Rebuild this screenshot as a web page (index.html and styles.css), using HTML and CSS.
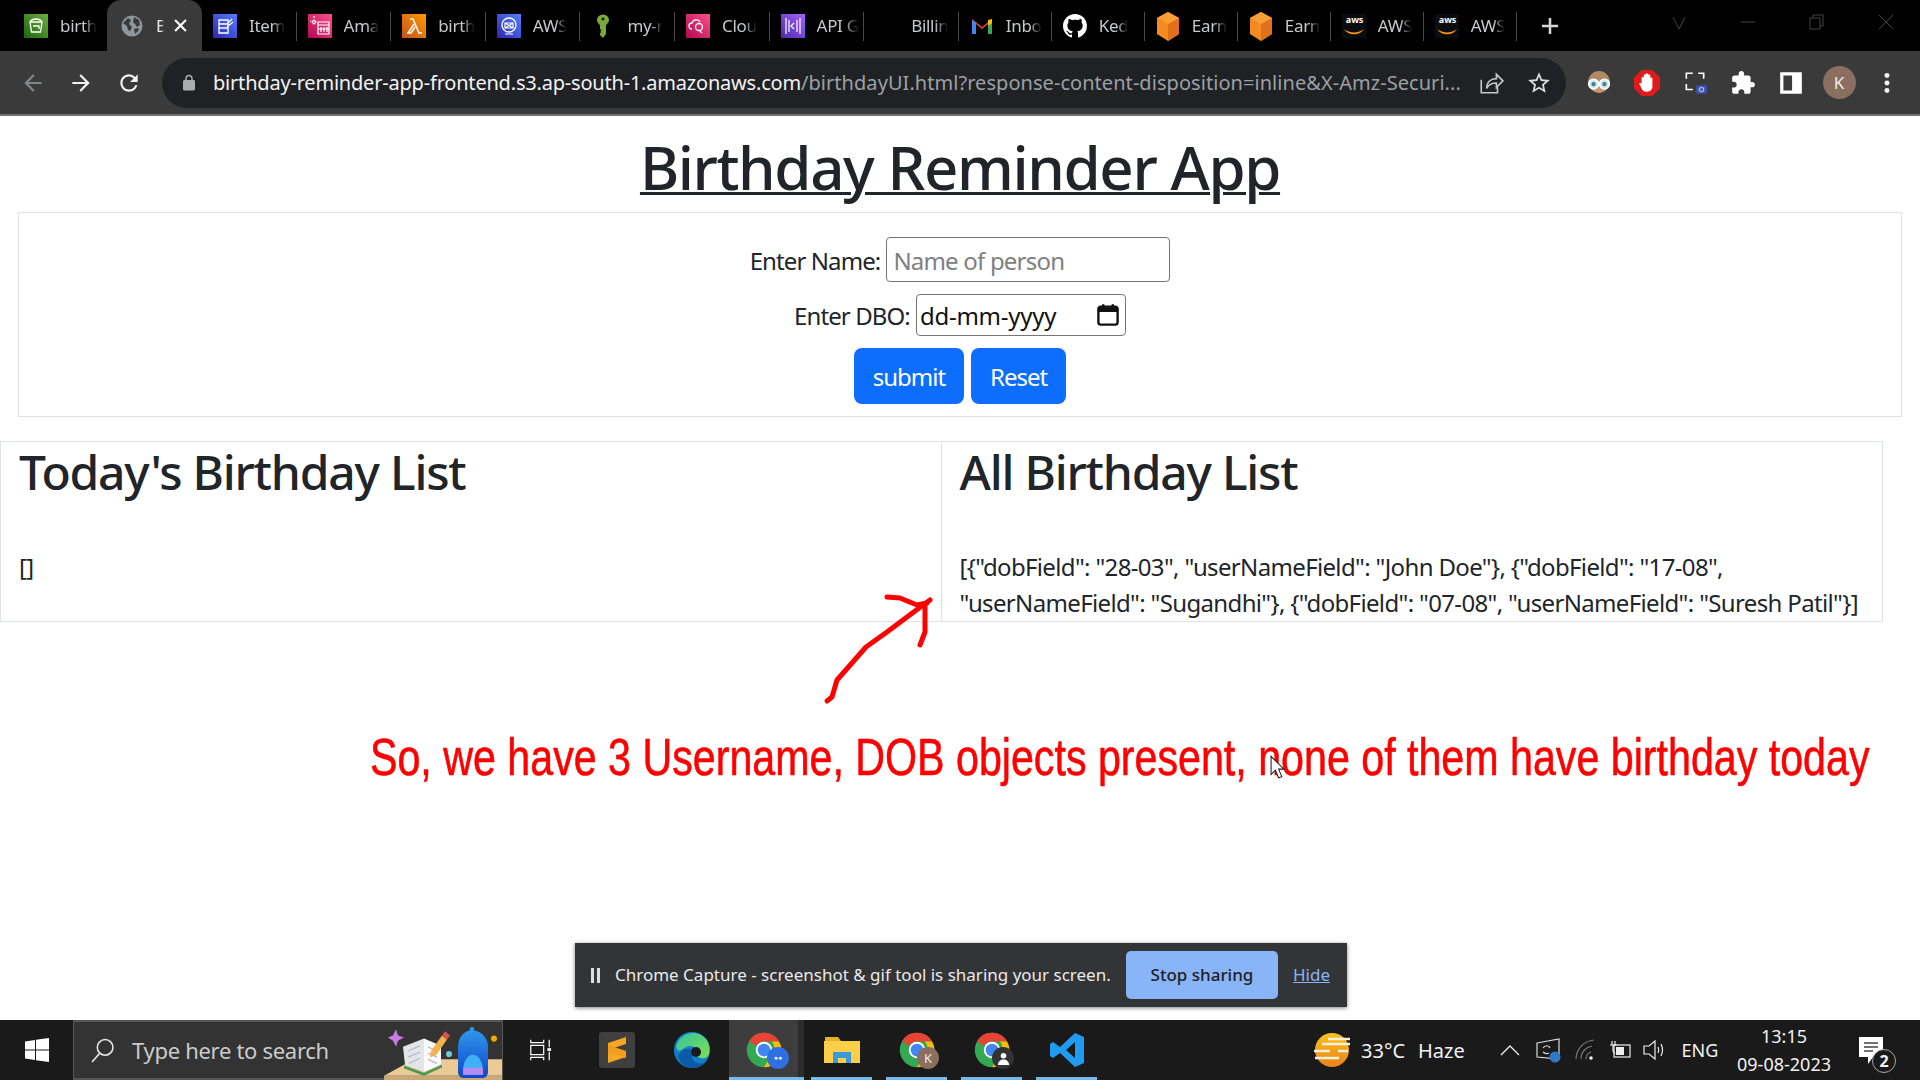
FILE: index.html
```html
<!DOCTYPE html>
<html lang="en">
<head>
<meta charset="utf-8">
<title>Birthday Reminder App</title>
<link rel="stylesheet" href="styles.css">
</head>
<body>
<svg class="sprite" width="0" height="0">
  <defs>
    <linearGradient id="gGreen" x1="0" y1="1" x2="1" y2="0"><stop offset="0" stop-color="#1b660f"/><stop offset="1" stop-color="#6cae3e"/></linearGradient>
    <linearGradient id="gBlue" x1="0" y1="1" x2="1" y2="0"><stop offset="0" stop-color="#2e27ad"/><stop offset="1" stop-color="#527fff"/></linearGradient>
    <linearGradient id="gPink" x1="0" y1="1" x2="1" y2="0"><stop offset="0" stop-color="#b0084d"/><stop offset="1" stop-color="#ff4f8b"/></linearGradient>
    <linearGradient id="gOrange" x1="0" y1="1" x2="1" y2="0"><stop offset="0" stop-color="#c8511b"/><stop offset="1" stop-color="#ff9900"/></linearGradient>
    <linearGradient id="gPurple" x1="0" y1="1" x2="1" y2="0"><stop offset="0" stop-color="#4d27a8"/><stop offset="1" stop-color="#a166ff"/></linearGradient>
    <linearGradient id="gEdge" x1="0" y1="0" x2="1" y2="1"><stop offset="0" stop-color="#34c1a0"/><stop offset="1" stop-color="#7ee04f"/></linearGradient>
    <linearGradient id="gSun" x1="0" y1="0" x2="0" y2="1"><stop offset="0" stop-color="#fcc21b"/><stop offset="1" stop-color="#e8821a"/></linearGradient>
    <linearGradient id="gBag" x1="0" y1="0" x2="0" y2="1"><stop offset="0" stop-color="#2f9bf0"/><stop offset="1" stop-color="#1345c8"/></linearGradient>
    <symbol id="chrome" viewBox="0 0 48 48">
      <circle cx="24" cy="24" r="23" fill="#34a853"/>
      <path d="M24 1a23 23 0 0 1 20 11.500H24a12 12 0 0 0-10.400 6L4 12A23 23 0 0 1 24 1z" fill="#ea4335"/>
      <path d="M44 12.500A23 23 0 0 1 24 47l10.400-17a12 12 0 0 0 0-17.500z" fill="#fbbc04"/>
      <circle cx="24" cy="24" r="11" fill="#fff"/><circle cx="24" cy="24" r="8.500" fill="#4285f4"/>
    </symbol>
    <symbol id="orangebox" viewBox="0 0 24 30">
      <path d="M12 1l11 6v16l-11 7-11-7V7z" fill="#f58a1f"/><path d="M12 13l11-6v16l-11 7z" fill="#e0701a"/><path d="M12 1l11 6-11 6L1 7z" fill="#fa9f35"/>
    </symbol>
    <symbol id="awslogo" viewBox="0 0 24 24">
      <rect width="24" height="24" fill="#0b0c0f"/>
      <path d="M2 15c5 4 14 5 20 0-4 7-16 7-20 0z" fill="#f90"/>
    </symbol>
  </defs>
</svg>

<header class="tabstrip">
  <div class="tab tab-first"><svg class="fav" viewBox="0 0 24 24"><rect width="24" height="24" fill="url(#gGreen)"/><path d="M6 8h12l-1.500 10h-9zM6 8c2-4 10-4 12 0M9 12h6v3" fill="none" stroke="#fff" stroke-width="1.300"/></svg><span class="tabtext">birth</span></div>
  <div class="tab tab-active"><svg class="fav" viewBox="0 0 24 24"><circle cx="12" cy="12" r="10.500" fill="#8f969c"/><path d="M3 9l5-5 3 2-2 4 3 3-2 4-2-1-1-4zM14 3l5 3 1 5-3 2-2-3-2-2zM14 15l4-1 1 2-4 4z" fill="#3a3a3a"/></svg><span class="tabtext tabtext-active">B</span><svg class="tabclose" viewBox="0 0 12 12"><path d="M1 1l10 10M11 1L1 11" stroke="#fff" stroke-width="2"/></svg></div>
  <div class="tab"><svg class="fav" viewBox="0 0 24 24"><rect width="24" height="24" fill="url(#gBlue)"/><path d="M6 6h9v13H6zM6 10h9M6 14h9M15 9l4-4M14 13l6-5" fill="none" stroke="#fff" stroke-width="1.300"/></svg><span class="tabtext">Item</span></div>
  <div class="tab tab-sep"><svg class="fav" viewBox="0 0 24 24"><rect width="24" height="24" fill="url(#gPink)"/><path d="M10 8h11v12H10zM10 11h11M13 13v5M16 13v5M19 13v5M10 15h11M4 8l2-2 2 2-2 2zM6 2v2M2 7h1" fill="none" stroke="#fff" stroke-width="1.200"/></svg><span class="tabtext">Ama</span></div>
  <div class="tab tab-sep"><svg class="fav" viewBox="0 0 24 24"><rect width="24" height="24" fill="url(#gOrange)"/><path d="M8 5h3l6 14h3M12 10L6 19h3l4-6" fill="none" stroke="#fff" stroke-width="1.500"/></svg><span class="tabtext">birth</span></div>
  <div class="tab tab-sep"><svg class="fav" viewBox="0 0 24 24"><rect width="24" height="24" fill="url(#gBlue)"/><circle cx="12" cy="11" r="7" fill="none" stroke="#fff" stroke-width="1.300"/><path d="M8 9h8v5H8zM8 9l8 5M16 9l-8 5M8 20h8" fill="none" stroke="#fff" stroke-width="1.200"/></svg><span class="tabtext">AWS</span></div>
  <div class="tab tab-sep"><svg class="fav" viewBox="0 0 24 24"><path d="M6 6a6 5.500 0 0 1 12 0c0 3-3 4-3 6v8l-3 4-3-3v-2l1.500-1-1.500-1 1.500-1-1.500-1v-3c0-2-3-3-3-6z" fill="#7ba83a"/><path d="M10.500 5h3M12 3.500v3" stroke="#111" stroke-width="1.300"/></svg><span class="tabtext">my-r</span></div>
  <div class="tab tab-sep"><svg class="fav" viewBox="0 0 24 24"><rect width="24" height="24" fill="url(#gPink)"/><path d="M6 15a3 3 0 0 1 0-6c1-4 7-4 8-1M16 19l-3-3" fill="none" stroke="#fff" stroke-width="1.300"/><circle cx="13" cy="13" r="3.500" fill="none" stroke="#fff" stroke-width="1.300"/></svg><span class="tabtext">Clou</span></div>
  <div class="tab tab-sep"><svg class="fav" viewBox="0 0 24 24"><rect width="24" height="24" fill="url(#gPurple)"/><path d="M5 4v16M8 6v12M16 6v12M19 4v16M13 9l-3 3 3 3" fill="none" stroke="#fff" stroke-width="1.200"/></svg><span class="tabtext">API G</span></div>
  <div class="tab tab-sep"><span class="fav"></span><span class="tabtext">Billin</span></div>
  <div class="tab tab-sep tab-narrow"><svg class="fav" viewBox="0 0 24 24"><path d="M2 5l10 8 10-8v15h-4V10l-6 5-6-5v10H2z" fill="#ea4335"/><path d="M2 6v14h4V9z" fill="#4285f4"/><path d="M22 6v14h-4V9z" fill="#34a853"/><path d="M22 5v4l-4 3V6z" fill="#fbbc04"/></svg><span class="tabtext">Inbo</span></div>
  <div class="tab tab-sep tab-narrow"><svg class="fav" viewBox="0 0 16 16"><path fill="#fff" d="M8 0C3.580 0 0 3.580 0 8c0 3.540 2.290 6.530 5.470 7.590.4.070.55-.17.55-.38 0-.19-.01-.82-.01-1.490-2.010.37-2.530-.49-2.690-.94-.09-.23-.48-.94-.82-1.130-.28-.15-.68-.52-.01-.53.63-.01 1.080.58 1.230.82.72 1.210 1.870.87 2.330.66.07-.52.28-.87.51-1.070-1.780-.2-3.640-.89-3.640-3.950 0-.87.31-1.590.82-2.150-.08-.2-.36-1.020.08-2.120 0 0 .67-.21 2.200.82.64-.18 1.320-.27 2-.27.68 0 1.360.09 2 .27 1.530-1.040 2.200-.82 2.200-.82.44 1.100.16 1.920.08 2.120.51.56.82 1.270.82 2.150 0 3.070-1.870 3.750-3.650 3.950.29.25.54.73.54 1.480 0 1.070-.01 1.930-.01 2.200 0 .21.15.46.55.38A8.013 8.013 0 0016 8c0-4.420-3.580-8-8-8z"/></svg><span class="tabtext">Ked</span></div>
  <div class="tab tab-sep tab-narrow"><svg class="fav fav-tall" viewBox="0 0 24 30"><use href="#orangebox"/></svg><span class="tabtext">Earn</span></div>
  <div class="tab tab-sep tab-narrow"><svg class="fav fav-tall" viewBox="0 0 24 30"><use href="#orangebox"/></svg><span class="tabtext">Earn</span></div>
  <div class="tab tab-sep tab-narrow"><svg class="fav" viewBox="0 0 24 24"><use href="#awslogo"/></svg><span class="awsmark">aws</span><span class="tabtext">AWS</span></div>
  <div class="tab tab-sep tab-narrow tab-last"><svg class="fav" viewBox="0 0 24 24"><use href="#awslogo"/></svg><span class="awsmark">aws</span><span class="tabtext">AWS</span></div>
  <svg class="newtab" viewBox="0 0 18 18"><path d="M9 1v16M1 9h16" stroke="#d6d6d6" stroke-width="2.500"/></svg>
  <div class="winctl">
    <svg class="winicon" viewBox="0 0 16 16"><path d="M2 3l6 12 6-12" fill="none" stroke="#444" stroke-width="1"/></svg>
    <svg class="winicon" viewBox="0 0 16 16"><path d="M1 8h14" stroke="#444" stroke-width="1"/></svg>
    <svg class="winicon" viewBox="0 0 16 16"><path d="M1 4h10v11H1zM4 4V1h10v11h-3" fill="none" stroke="#444" stroke-width="1"/></svg>
    <svg class="winicon" viewBox="0 0 16 16"><path d="M1 1l14 14M15 1L1 15" stroke="#444" stroke-width="1"/></svg>
  </div>
</header>

<nav class="toolbar">
  <div class="navbtn"><svg class="navicon" viewBox="0 0 24 24"><path fill="#80868b" d="M20 11H7.830l5.590-5.590L12 4l-8 8 8 8 1.410-1.410L7.830 13H20v-2z"/></svg></div>
  <div class="navbtn"><svg class="navicon" viewBox="0 0 24 24"><path fill="#f1f3f4" d="M4 11h12.170l-5.590-5.590L12 4l8 8-8 8-1.410-1.410L16.170 13H4v-2z"/></svg></div>
  <div class="navbtn"><svg class="navicon" viewBox="0 0 24 24"><path fill="#f1f3f4" d="M17.650 6.350A7.958 7.958 0 0012 4c-4.420 0-7.990 3.580-7.990 8s3.570 8 7.990 8c3.730 0 6.840-2.550 7.730-6h-2.080A5.990 5.990 0 0112 18c-3.310 0-6-2.690-6-6s2.690-6 6-6c1.660 0 3.140.69 4.220 1.780L13 11h7V4l-2.350 2.350z"/></svg></div>
  <div class="omnibox">
    <svg class="lock" viewBox="0 0 24 24"><path fill="#a9adb2" d="M18 8h-1V6c0-2.760-2.240-5-5-5S7 3.240 7 6v2H6c-1.100 0-2 .9-2 2v10c0 1.100.9 2 2 2h12c1.100 0 2-.9 2-2V10c0-1.100-.9-2-2-2zM9 6c0-1.660 1.340-3 3-3s3 1.340 3 3v2H9V6z"/></svg>
    <div class="url"><span class="url-host">birthday-reminder-app-frontend.s3.ap-south-1.amazonaws.com</span><span class="url-path">/birthdayUI.html?response-content-disposition=inline&amp;X-Amz-Securi...</span></div>
    <div class="navbtn"><svg class="navicon" viewBox="0 0 24 24"><path d="M3 9v12h15v-5M8 17c0-6 4-9 9-9V4l6 6-6 6v-4c-4 0-7 1-9 5z" fill="none" stroke="#c4c7ca" stroke-width="1.500"/></svg></div>
    <div class="navbtn"><svg class="navicon" viewBox="0 0 24 24"><path fill="#dadce0" d="M22 9.240l-7.190-.62L12 2 9.190 8.630 2 9.240l5.460 4.730L5.820 21 12 17.270 18.180 21l-1.630-7.030L22 9.240zM12 15.400l-3.760 2.270 1-4.280-3.320-2.880 4.380-.38L12 6.100l1.710 4.040 4.380.38-3.320 2.880 1 4.280L12 15.400z"/></svg></div>
  </div>
  <div class="extensions">
    <div class="navbtn"><svg class="navicon" viewBox="0 0 24 24"><circle cx="12" cy="11" r="10" fill="#b18a62"/><path d="M5 15c2 8 12 8 14 0z" fill="#c9936f"/><circle cx="7" cy="13" r="4.500" fill="#cfe6ea" stroke="#fff" stroke-width="1.500"/><circle cx="17" cy="13" r="4.500" fill="#cfe6ea" stroke="#fff" stroke-width="1.500"/><circle cx="7" cy="13" r="2" fill="#3e7f8a"/><circle cx="17" cy="13" r="2" fill="#3e7f8a"/></svg></div>
    <div class="navbtn"><svg class="navicon" viewBox="0 0 24 24"><path d="M7 0h10l7 7v10l-7 7H7l-7-7V7z" fill="#e01b1b"/><path d="M7 12V7.500a1 1 0 0 1 2 0V5a1 1 0 0 1 2 0V4a1 1 0 0 1 2 0v1a1 1 0 0 1 2 0v3a1 1 0 0 1 2 0v7c0 3-2 5-5 5-3 0-4-1-5-3l-2-4c-.5-1 1-1.500 2-.5z" fill="#fff"/></svg></div>
    <div class="navbtn"><svg class="navicon" viewBox="0 0 24 24"><path d="M4 8V3h6M15 3h5v5M4 13v5h6" fill="none" stroke="#fff" stroke-width="1.500"/><rect x="13" y="14" width="10" height="8" rx="1" fill="#3b52a8"/><circle cx="18" cy="18" r="2" fill="none" stroke="#9db4ef" stroke-width="1.200"/></svg></div>
    <div class="navbtn"><svg class="navicon" viewBox="0 0 24 24"><path fill="#fff" d="M20.500 11H19V7c0-1.100-.9-2-2-2h-4V3.500C13 2.120 11.880 1 10.500 1S8 2.120 8 3.500V5H4c-1.100 0-1.990.9-1.990 2v3.800H3.500c1.490 0 2.700 1.210 2.700 2.700s-1.210 2.700-2.700 2.700H2V20c0 1.100.9 2 2 2h3.800v-1.500c0-1.490 1.210-2.700 2.700-2.700 1.490 0 2.700 1.210 2.700 2.700V22H17c1.100 0 2-.9 2-2v-4h1.500c1.380 0 2.500-1.120 2.500-2.500S21.880 11 20.500 11z"/></svg></div>
    <div class="navbtn"><svg class="navicon" viewBox="0 0 24 24"><path fill="#fff" fill-rule="evenodd" d="M2 2h20v20H2zM5 5v14h8V5z"/></svg></div>
    <div class="navbtn"><div class="avatar">K</div></div>
    <div class="navbtn"><svg class="navicon" viewBox="0 0 24 24"><circle cx="12" cy="5" r="2.300" fill="#f1f3f4"/><circle cx="12" cy="12" r="2.300" fill="#f1f3f4"/><circle cx="12" cy="19" r="2.300" fill="#f1f3f4"/></svg></div>
  </div>
</nav>

<main class="page">
  <h1 class="title">Birthday Reminder App</h1>
  <form class="card">
    <div class="field"><label class="label" for="nm">Enter Name:</label> <input id="nm" class="input input-name" type="text" placeholder="Name of person"></div>
    <div class="field"><label class="label" for="dob">Enter DBO:</label> <span id="dob" class="input input-date"><span class="datetext">dd-mm-yyyy</span><svg class="cal" viewBox="0 0 20 20"><rect x="2" y="3" width="16" height="15" rx="2" fill="none" stroke="#111" stroke-width="2"/><path d="M2 5.500h16" stroke="#111" stroke-width="4"/><path d="M6 1v3M14 1v3" stroke="#111" stroke-width="2"/></svg></span></div>
    <div class="actions"><button class="btn" type="button">submit</button><button class="btn" type="button">Reset</button></div>
  </form>
  <section class="lists">
    <div class="listcol">
      <h2 class="listhead">Today's Birthday List</h2>
      <p class="listbody">[]</p>
    </div>
    <div class="listcol listcol-right">
      <h2 class="listhead">All Birthday List</h2>
      <p class="listbody">[{"dobField": "28-03", "userNameField": "John Doe"}, {"dobField": "17-08",<br>"userNameField": "Sugandhi"}, {"dobField": "07-08", "userNameField": "Suresh Patil"}]</p>
    </div>
  </section>

  <svg class="arrow" viewBox="0 0 120 120" fill="none" stroke="#f00" stroke-width="5" stroke-linecap="round" stroke-linejoin="round">
    <path d="M7 111l5-4 5-17 15-17 14-16 21-15 20-15 23-17"/>
    <path d="M67 7l13 1 17 7 10-2"/>
    <path d="M105 15v27l-5 13"/>
  </svg>
  <div class="annotation">So, we have 3 Username, DOB objects present, none of them have birthday today</div>
  <svg class="cursor" viewBox="0 0 14 22"><path d="M1 1v17l4-4 3 7 3-1-3-7h5z" fill="#fff" stroke="#222" stroke-width="1"/></svg>

  <div class="capture">
    <span class="pausebars"></span>
    <span class="capture-text">Chrome Capture - screenshot &amp; gif tool is sharing your screen.</span>
    <span class="stopbtn">Stop sharing</span>
    <a class="hidelink" href="#">Hide</a>
  </div>
</main>

<footer class="taskbar">
  <div class="start"><svg class="winlogo" viewBox="0 0 24 24"><path fill="#fff" d="M0 3.500L10 2v9.500H0zM11 1.800L24 0v11.500H11zM0 12.500h10V22L0 20.500zM11 12.500h13V24l-13-1.800z"/></svg></div>
  <div class="search">
    <svg class="searchicon" viewBox="0 0 24 24"><circle cx="14.500" cy="9" r="7.500" fill="none" stroke="#e6e6e6" stroke-width="1.500"/><path d="M9 15l-7 8" stroke="#e6e6e6" stroke-width="1.500"/></svg>
    <span class="searchtext">Type here to search</span>
    <svg class="searchart" viewBox="0 0 118 56" preserveAspectRatio="none">
      <path d="M0 52L30 36h88v16z" fill="#ecca96"/>
      <path d="M0 52h118v4H0z" fill="#c9a777"/>
      <path d="M20 42l20 7 18-8v3l-18 8-20-7z" fill="#4e9a55"/>
      <path d="M19 24l21-8v32l-19-7z" fill="#e4e5ea"/>
      <path d="M40 16l17 7v18l-17 7z" fill="#fafafa"/>
      <path d="M44 24l9 4M44 30l9 4M44 36l9 4M24 28l12-5M24 34l12-5M25 40l11-5" stroke="#b8bcc8" stroke-width="1.300"/>
      <path d="M47 28l11-15 5 4-11 15-6 2z" fill="#f3b34a"/><path d="M58 13l3-4 5 4-3 4z" fill="#d9534f"/>
      <path d="M12 7l2 6 6 2-6 3-2 6-3-6-5-3 5-2z" fill="#c77de0"/>
      <circle cx="65" cy="31" r="3" fill="#6fc7d8"/>
      <path d="M74 48V24c0-9 6-15 12-16V5h4v3c7 1 14 7 14 16v24c0 3-2 6-5 6H79c-3 0-5-3-5-6z" fill="url(#gBag)"/>
      <path d="M79 48c0-22 20-22 20 0v3H79z" fill="#3eb0f5"/><path d="M79 44h20v7H79z" fill="#b28cf0"/>
      <circle cx="110" cy="16" r="3" fill="#f2a900"/>
    </svg>
  </div>
  <div class="apps">
    <div class="app"><svg class="taskview" viewBox="0 0 26 24"><path d="M3 1v3h14V1M3 7h14v10H3zM3 23v-3h14v3M23 1v8M23 14v9" fill="none" stroke="#fff" stroke-width="1.300"/><rect x="21" y="10" width="4" height="3" fill="#fff"/></svg></div>
    <div class="app"><svg class="appicon-lg" viewBox="0 0 36 36"><rect width="36" height="36" rx="3" fill="#3f3f3f"/><path d="M9 13l18-6v7L9 20zM9 21l18 6-18 6v0z" fill="#f5a623" transform="translate(0 -2)"/><path d="M9 13l18 6v7L9 20z" fill="#f09e1b"/></svg></div>
    <div class="app"><svg class="appicon" viewBox="0 0 36 36"><circle cx="18" cy="18" r="18" fill="#0f7fce"/><path d="M2 15C5 3 17-2 27 3c7 4 10 11 8 19-2 5-7 5-11 3-4-2-4-6-1-8-3-4-10-4-14 0-3 2-5 3-7-2z" fill="url(#gEdge)"/><path d="M18 22c-1 7 5 11 13 9-3 3-8 5-13 5-7 0-13-5-14-12 3-6 9-9 14-6z" fill="#0b5aa5"/><circle cx="22" cy="20" r="5" fill="#1a1a1a"/></svg></div>
    <div class="app app-open app-active"><svg class="appicon" viewBox="0 0 36 36"><use href="#chrome"/></svg><span class="appbadge appbadge-blue">&#9679;&#9679;</span></div>
    <div class="app app-open"><svg class="appicon" viewBox="0 0 36 36"><path d="M1 5h13l3 4h18v2H1z" fill="#e2b32b"/><path d="M0 9h36v22H0z" fill="#fbcf4a"/><path d="M9 31V20h18v11h-5v-5h-8v5z" fill="#3a9ad9"/></svg></div>
    <div class="app app-open"><svg class="appicon" viewBox="0 0 36 36"><use href="#chrome"/></svg><span class="appbadge">K</span></div>
    <div class="app app-open"><svg class="appicon" viewBox="0 0 36 36"><use href="#chrome"/></svg><span class="appbadge appbadge-dark"><svg class="personicon" viewBox="0 0 14 14"><circle cx="7" cy="4" r="3" fill="#fff"/><path d="M1 14c0-8 12-8 12 0z" fill="#fff"/></svg></span></div>
    <div class="app app-open"><svg class="appicon" viewBox="0 0 36 36"><path d="M26 1l9 4v26l-9 4-15-14-7 5-3-2V12l3-2 7 5zM26 10l-9 8 9 8z" fill="#1f9cf0"/></svg></div>
  </div>
  <div class="tray">
    <svg class="weather" viewBox="0 0 36 36"><circle cx="18" cy="18" r="17" fill="url(#gSun)"/><path d="M14 7h22M8 12h28M0 19h16M24 19h10M1 26h24" stroke="#f6f0dc" stroke-width="2.500"/></svg>
    <span class="temp">33°C</span><span class="haze">Haze</span>
    <div class="traycell traycell-caret"><svg class="trayicon" viewBox="0 0 20 12"><path d="M1 11l9-9 9 9" fill="none" stroke="#eee" stroke-width="1.300"/></svg></div>
    <div class="traycell traycell-sync"><svg class="syncicon" viewBox="0 0 26 26"><path d="M1 6l22-4v20L1 20z" fill="none" stroke="#ddd" stroke-width="1.200"/><path d="M7 11c2-3 6-3 7 0M7 15c2 2 4 2 6 1" fill="none" stroke="#ddd" stroke-width="1.200"/><circle cx="19" cy="20" r="5.500" fill="#3178c6"/></svg></div>
    <div class="traycell traycell-wifi"><svg class="trayicon-md" viewBox="0 0 22 22"><path d="M1 20C1 10 9 2 19 1M6 20c0-7 5-12 11-13M11 20c0-3 2-6 5-7" fill="none" stroke="#777" stroke-width="1.200"/><circle cx="16" cy="19" r="1.800" fill="#eee"/></svg></div>
    <div class="traycell traycell-batt"><svg class="trayicon-md" viewBox="0 0 24 20"><rect x="6" y="5" width="16" height="12" fill="none" stroke="#eee" stroke-width="1.200"/><rect x="8" y="7" width="8" height="8" fill="#eee"/><path d="M2 5h7M4 1v4M7 1v4M5 5v6l2 3" fill="none" stroke="#eee" stroke-width="1.200"/></svg></div>
    <div class="traycell traycell-vol"><svg class="trayicon-md" viewBox="0 0 24 22"><path d="M1 7h5l6-5v18l-6-5H1z" fill="none" stroke="#eee" stroke-width="1.200"/><path d="M15 8c1 2 1 4 0 6M18 5c2 4 2 8 0 12" fill="none" stroke="#eee" stroke-width="1.200"/></svg></div>
    <div class="traycell traycell-lang">ENG</div>
    <div class="clock"><span>13:15</span><span>09-08-2023</span></div>
    <div class="notify"><svg class="notifyicon" viewBox="0 0 24 28"><path d="M0 0h24v20H14l-5 7v-7H0z" fill="#fff"/><path d="M5 6h14M5 10h14M5 14h9" stroke="#444" stroke-width="1.500"/></svg><span class="notifybadge">2</span></div>
  </div>
</footer>
</body>
</html>
```

FILE: styles.css
```css
* { box-sizing: border-box; }
html, body { margin: 0; padding: 0; }
body {
  width: 1920px;
  height: 1080px;
  overflow: hidden;
  display: flex;
  flex-direction: column;
  font-family: "Noto Sans", "Open Sans", sans-serif;
  background: #fff;
}
.sprite { position: absolute; }

/* tab strip */
.tabstrip {
  height: 51px;
  flex: none;
  background: #000;
  display: flex;
  padding-left: 13px;
  position: relative;
}
.tab {
  width: 94.6px;
  height: 51px;
  flex: none;
  display: flex;
  align-items: center;
  padding: 0 11px;
  gap: 12px;
  position: relative;
}
.tab-first { width: 94px; }
.tab-narrow { width: 93px; }
.tab-sep::before {
  content: "";
  position: absolute;
  left: -1px;
  top: 12px;
  width: 1px;
  height: 29px;
  background: #4a4a4a;
}
.tab-last::after {
  content: "";
  position: absolute;
  right: 0;
  top: 12px;
  width: 1px;
  height: 29px;
  background: #4a4a4a;
}
.tab-active {
  width: 95px;
  background: #3a3a3a;
  border-radius: 14px 14px 0 0;
  padding-left: 13px;
}
.fav { width: 24px; height: 24px; flex: none; }
.fav-tall { height: 30px; }
.tabtext {
  font-size: 17px;
  letter-spacing: -0.3px;
  color: #c6c8ca;
  white-space: nowrap;
  flex: none;
  -webkit-mask-image: linear-gradient(90deg, #000 65%, transparent 100%);
  mask-image: linear-gradient(90deg, #000 65%, transparent 100%);
}
.tabtext-active { color: #e8e8e8; width: 8px; }
.tabclose { width: 13px; height: 13px; flex: none; margin-left: -2px; }
.awsmark {
  position: absolute;
  left: 15px;
  top: 13px;
  font-size: 9px;
  font-weight: 700;
  color: #fff;
}
.newtab { width: 18px; height: 18px; flex: none; align-self: center; margin-left: 24px; }
.winctl {
  margin-left: auto;
  display: flex;
  align-items: center;
  gap: 53px;
  padding-right: 26px;
  padding-bottom: 8px;
}
.winicon { width: 16px; height: 16px; }

/* toolbar */
.toolbar {
  height: 65px;
  flex: none;
  background: #3a3a3a;
  border-bottom: 2px solid #6f6f6f;
  display: flex;
  align-items: center;
  padding-left: 9px;
}
.navbtn { width: 48px; height: 48px; flex: none; display: flex; align-items: center; justify-content: center; }
.navicon { width: 26px; height: 26px; }
.omnibox {
  width: 1404px;
  height: 50px;
  margin-left: 9px;
  background: #202124;
  border-radius: 25px;
  display: flex;
  align-items: center;
  padding: 0 3px 0 18px;
  flex: none;
}
.lock { width: 18px; height: 18px; flex: none; }
.url {
  flex: 1;
  margin-left: 15px;
  white-space: nowrap;
  font-size: 20px;
  letter-spacing: -0.2px;
}
.url-host { color: #f1f3f4; }
.url-path { color: #9aa0a6; letter-spacing: 0.05px; }
.extensions { display: flex; margin-left: 9px; }
.avatar {
  width: 33px;
  height: 33px;
  border-radius: 50%;
  background: #8a6e60;
  color: #f3eeea;
  font-size: 17px;
  display: flex;
  align-items: center;
  justify-content: center;
}

/* page */
.page {
  flex: 1;
  position: relative;
  background: #fff;
  color: #212529;
  font-size: 24px;
  line-height: 36px;
}
.title {
  margin: 15px 0 9px;
  font-size: 60px;
  line-height: 72px;
  font-weight: 500;
  letter-spacing: -1.4px;
  text-align: center;
  text-decoration: underline;
  text-decoration-thickness: 3px;
}
.card {
  margin: 0 18px;
  height: 205px;
  border: 1px solid #dee2e6;
  padding-top: 24px;
  display: flex;
  flex-direction: column;
  align-items: center;
}
.field { display: flex; align-items: center; gap: 6px; margin-bottom: 12px; }
.label { white-space: nowrap; letter-spacing: -0.9px; padding-top: 2px; }
.input {
  border: 1px solid #767676;
  border-radius: 4px;
  font: inherit;
  background: #fff;
  color: #111;
}
.input-name { width: 284px; height: 45px; padding: 2px 6px 0; letter-spacing: -0.8px; }
.input-name::placeholder { color: #808080; opacity: 1; }
.input-date {
  width: 210px;
  height: 42px;
  padding: 0 5px 0 3px;
  display: flex;
  align-items: center;
  justify-content: space-between;
}
.datetext { letter-spacing: -0.25px; padding-top: 2px; }
.cal { width: 24px; height: 24px; }
.actions { display: flex; gap: 7px; }
.btn {
  height: 56px;
  padding: 2px 19px 0;
  border: 0;
  border-radius: 8px;
  background: #0d6efd;
  color: #fff;
  font: inherit;
  letter-spacing: -1px;
}
.lists { display: flex; width: 1883px; margin-top: 24px; }
.listcol {
  width: 50%;
  flex: none;
  height: 181px;
  border: 1px solid #dee2e6;
  padding: 0 18px;
}
.listcol-right { border-left: 0; }
.listhead {
  margin: 1px 0 48px;
  font-size: 48px;
  line-height: 58px;
  font-weight: 500;
  letter-spacing: -1.2px;
}
.listbody { margin: 0; white-space: nowrap; letter-spacing: -0.65px; }

/* overlays */
.arrow { position: absolute; left: 820px; top: 474px; width: 120px; height: 120px; }
.annotation {
  position: absolute;
  left: 370px;
  top: 608px;
  font-family: "Liberation Sans", Arial, sans-serif;
  font-size: 52px;
  line-height: 66px;
  color: #f00;
  -webkit-text-stroke: 0.6px #f00;
  white-space: nowrap;
  transform: scaleX(0.792);
  transform-origin: left center;
}
.cursor { position: absolute; left: 1270px; top: 639px; width: 15px; height: 24px; }
.capture {
  position: absolute;
  left: 575px;
  top: 827px;
  width: 772px;
  height: 64px;
  background: #333435;
  box-shadow: 0 1px 4px rgba(0, 0, 0, .5);
  display: flex;
  align-items: center;
  padding-left: 16px;
  font-size: 17px;
  color: #e8eaed;
}
.pausebars { width: 9px; height: 15px; border-left: 3px solid #ddd; border-right: 3px solid #ddd; flex: none; }
.capture-text { margin-left: 15px; white-space: nowrap; width: 511px; }
.stopbtn {
  width: 152px;
  height: 48px;
  border-radius: 5px;
  background: #8ab4f8;
  color: #202124;
  display: flex;
  align-items: center;
  justify-content: center;
  font-weight: 500;
}
.hidelink { margin-left: 15px; color: #8ab4f8; }

/* taskbar */
.taskbar {
  height: 60px;
  flex: none;
  background: #1a1a1a;
  display: flex;
  color: #f2f2f2;
}
.start { width: 73px; display: flex; align-items: center; justify-content: center; }
.winlogo { width: 24px; height: 24px; }
.search {
  width: 430px;
  background: #333;
  border: solid #555;
  border-width: 2px 1px 2px 1px;
  display: flex;
  align-items: center;
  padding-left: 16px;
  position: relative;
}
.searchicon { width: 25px; height: 25px; flex: none; }
.searchtext { margin-left: 17px; font-size: 22px; letter-spacing: -0.3px; color: #ccc; white-space: nowrap; }
.searchart { position: absolute; right: 0; top: 0; width: 118px; height: 58px; }
.apps { display: flex; margin-left: 1px; padding-left: 0; }
.app {
  width: 75px;
  height: 60px;
  display: flex;
  align-items: center;
  justify-content: center;
  position: relative;
}
.app-open::after {
  content: "";
  position: absolute;
  left: 7px;
  right: 7px;
  bottom: 0;
  height: 3px;
  background: #76b9ed;
}
.app-active { background: #3d3d3d; border-right: 6px solid #2c2c2c; }
.app-active::after { left: 0; right: -6px; }
.taskview { width: 24px; height: 28px; margin-right: 4px; }
.appicon { width: 36px; height: 36px; }
.appicon-lg { width: 36px; height: 38px; }
.appbadge {
  position: absolute;
  left: 38px;
  top: 27px;
  width: 22px;
  height: 22px;
  border-radius: 50%;
  background: #8a6e60;
  color: #eee;
  font-size: 13px;
  line-height: 22px;
  text-align: center;
}
.appbadge-blue { background: #2f6fe0; font-size: 7px; }
.appbadge-dark { background: #333; display: flex; align-items: center; justify-content: center; }
.personicon { width: 13px; height: 13px; }
.tray {
  margin-left: auto;
  width: 606px;
  flex: none;
  display: flex;
  align-items: center;
}
.weather { width: 36px; height: 36px; flex: none; }
.temp { margin-left: 11px; font-size: 20px; width: 57px; }
.haze { font-size: 20px; width: 71px; }
.traycell { display: flex; align-items: center; justify-content: center; flex: none; height: 60px; }
.traycell-caret { width: 41px; }
.traycell-sync { width: 37px; }
.traycell-wifi { width: 37px; }
.traycell-batt { width: 32px; }
.traycell-vol { width: 37px; }
.traycell-lang { width: 54px; font-size: 18px; }
.trayicon { width: 20px; height: 12px; }
.syncicon { width: 26px; height: 26px; }
.trayicon-md { width: 24px; height: 22px; }
.clock {
  width: 114px;
  display: flex;
  flex-direction: column;
  align-items: center;
  font-size: 18px;
  line-height: 28px;
}
.notify { width: 60px; position: relative; height: 60px; }
.notifyicon { position: absolute; left: 18px; top: 17px; width: 24px; height: 28px; }
.notifybadge {
  position: absolute;
  left: 31px;
  top: 29px;
  width: 24px;
  height: 24px;
  border-radius: 50%;
  background: #1a1a1a;
  border: 1px solid #aaa;
  font-size: 16px;
  font-weight: 700;
  line-height: 22px;
  text-align: center;
}
```
